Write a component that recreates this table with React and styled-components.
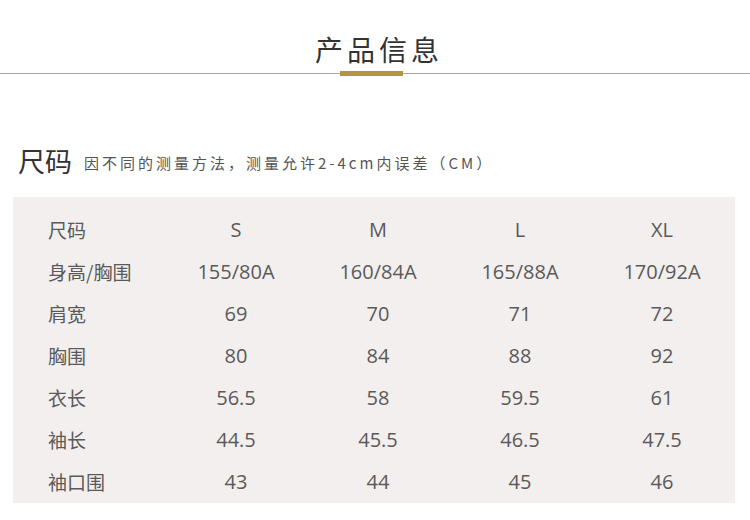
import React from "react";
import styled, { createGlobalStyle } from "styled-components";

const GlobalStyle = createGlobalStyle`
    body {
        margin: 0;
        background: #ffffff;
        font-family: "Open Sans", "Noto Sans CJK SC", sans-serif;
    }
`;

const sizes = ["S", "M", "L", "XL"];

const rows = [
    { label: "身高/胸围", values: ["155/80A", "160/84A", "165/88A", "170/92A"] },
    { label: "肩宽", values: ["69", "70", "71", "72"] },
    { label: "胸围", values: ["80", "84", "88", "92"] },
    { label: "衣长", values: ["56.5", "58", "59.5", "61"] },
    { label: "袖长", values: ["44.5", "45.5", "46.5", "47.5"] },
    { label: "袖口围", values: ["43", "44", "45", "46"] },
];

export const App = () => {
    return (
        <Page>
            <GlobalStyle />
            <Header>
                <Title>产品信息</Title>
                <Divider>
                    <Rule $width="340px" />
                    <Accent />
                    <Rule />
                </Divider>
            </Header>

            <SectionHead>
                <SectionTitle>尺码</SectionTitle>
                <SectionNote>因不同的测量方法，测量允许2-4cm内误差（CM）</SectionNote>
            </SectionHead>

            <Table>
                <Row>
                    <Label>尺码</Label>
                    {sizes.map((s) => (
                        <Cell key={s}>{s}</Cell>
                    ))}
                </Row>
                {rows.map((r) => (
                    <Row key={r.label}>
                        <Label>{r.label}</Label>
                        {r.values.map((v, i) => (
                            <Cell key={i}>{v}</Cell>
                        ))}
                    </Row>
                ))}
            </Table>
        </Page>
    );
};

const Page = styled.div`
    width: 750px;
    height: 520px;
    overflow: hidden;
`;

const Header = styled.header`
    display: flex;
    flex-direction: column;
    align-items: center;
    padding-top: 29px;
`;

const Title = styled.h1`
    margin: 0;
    font-family: "Noto Sans CJK SC", sans-serif;
    font-weight: 400;
    font-size: 28px;
    letter-spacing: 4px;
    line-height: 40px;
    color: #333333;
    padding-left: 8px;
`;

const Divider = styled.div`
    margin-top: 2px;
    width: 100%;
    height: 5px;
    display: flex;
    align-items: center;
`;

const Rule = styled.div`
    flex: ${(p) => (p.$width ? `0 0 ${p.$width}` : "1")};
    height: 1px;
    background: #a6a6a6;
`;

const Accent = styled.div`
    width: 63px;
    height: 5px;
    background: #b3953d;
`;

const SectionHead = styled.div`
    display: flex;
    align-items: center;
    margin-top: 66px;
    padding-left: 18px;
    height: 36px;
`;

const SectionTitle = styled.h2`
    margin: 0;
    font-family: "Noto Sans CJK SC", sans-serif;
    font-weight: 400;
    font-size: 27px;
    color: #333333;
`;

const SectionNote = styled.span`
    margin-left: 12px;
    margin-top: 4px;
    font-family: "Noto Sans CJK SC", sans-serif;
    font-size: 15px;
    letter-spacing: 3px;
    text-spacing-trim: space-all;
    color: #555555;
`;

const Table = styled.div`
    margin: 19px 0 0 13px;
    width: 722px;
    padding: 11px 0 1px;
    background: #f2efee;
`;

const Row = styled.div`
    display: grid;
    grid-template-columns: 152px repeat(4, 142px);
    height: 42px;
    align-items: center;
    font-size: 20px;
    color: #5a5a5a;
`;

const Label = styled.div`
    padding-left: 35px;
    font-family: "Noto Sans CJK SC", sans-serif;
    font-size: 19px;
`;

const Cell = styled.div`
    text-align: center;
`;

export default App;
